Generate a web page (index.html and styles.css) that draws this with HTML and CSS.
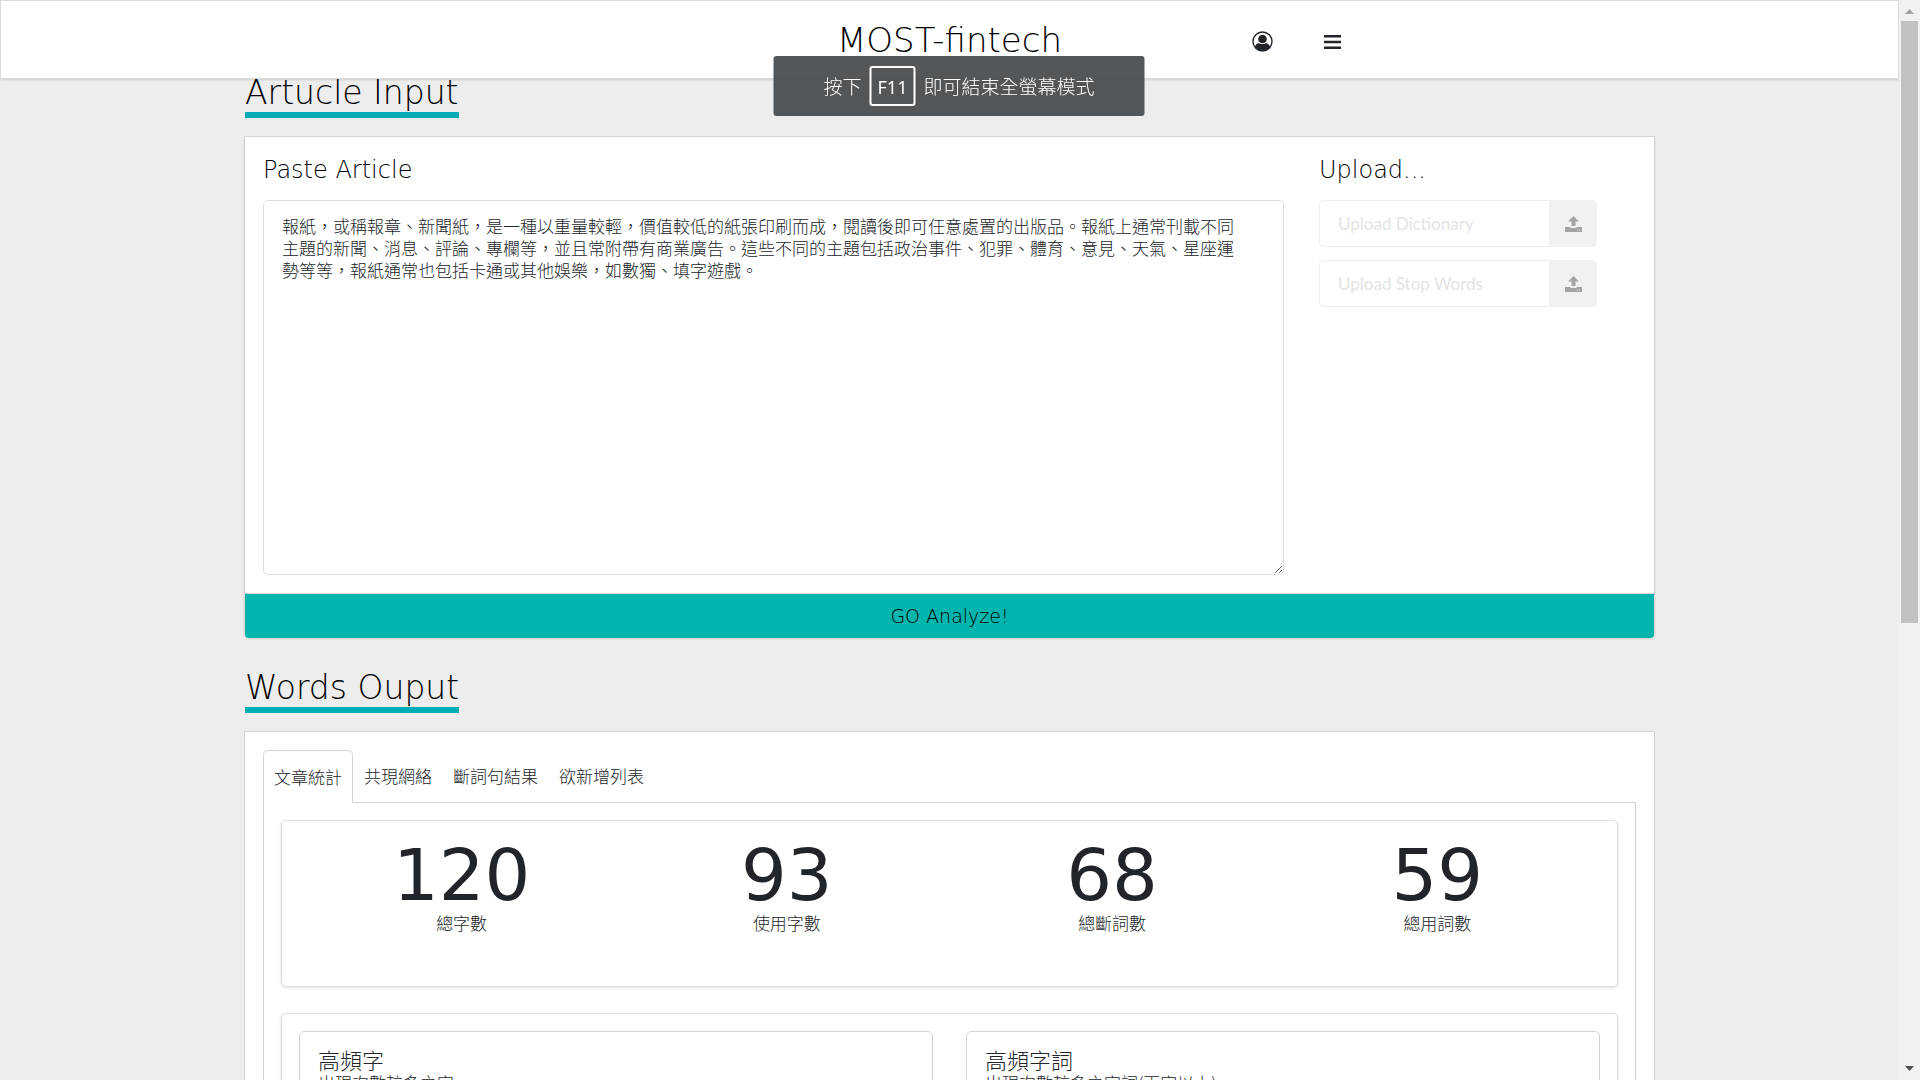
FILE: index.html
```html
<!DOCTYPE html>
<html lang="zh-Hant">
<head>
<meta charset="utf-8">
<title>MOST-fintech</title>
<meta name="viewport" content="width=device-width, initial-scale=1">
<link rel="stylesheet" href="styles.css">
</head>
<body>
<header class="topbar">
  <div class="topbar-inner">
    <h1 class="brand">MOST-fintech</h1>
    <nav class="topbar-actions" aria-label="Main">
      <button class="icon-button" type="button" aria-label="Account">
        <svg width="21" height="21" viewBox="0 0 21 21" fill="currentColor" aria-hidden="true"><circle cx="10.500" cy="10.500" r="9.500" fill="none" stroke="currentColor" stroke-width="1.400"/><circle cx="10.500" cy="8" r="4.300"/><path d="M3 16.200C3.300 13.600 5 12.200 7.200 12.200a7 7 0 0 0 6.600 0C16 12.200 17.700 13.600 18 16.200A9.500 9.500 0 0 1 3 16.200z"/></svg>
      </button>
      <button class="icon-button" type="button" aria-label="Menu">
        <svg width="17" height="14" viewBox="0 0 17 14" fill="currentColor" aria-hidden="true"><path d="M0 0h17v2.500H0zM0 5.800h17v2.500H0zM0 11.500h17v2.500H0z"/></svg>
      </button>
    </nav>
  </div>
</header>

<div class="fullscreen-notice" role="status">按下<kbd class="key">F11</kbd>即可結束全螢幕模式</div>

<main class="page">
  <section class="block">
    <h2 class="section-title">Artucle Input</h2>
    <form class="panel">
      <div class="input-grid">
        <div class="article">
          <label class="field-title" for="article">Paste Article</label>
          <textarea class="article-text" id="article">報紙，或稱報章、新聞紙，是一種以重量較輕，價值較低的紙張印刷而成，閱讀後即可任意處置的出版品。報紙上通常刊載不同主題的新聞、消息、評論、專欄等，並且常附帶有商業廣告。這些不同的主題包括政治事件、犯罪、體育、意見、天氣、星座運勢等等，報紙通常也包括卡通或其他娛樂，如數獨、填字遊戲。</textarea>
        </div>
        <div class="uploads">
          <h3 class="field-title">Upload...</h3>
          <div class="upload">
            <input class="upload-input" type="text" placeholder="Upload Dictionary" aria-label="Upload Dictionary" disabled>
            <button class="upload-button" type="button" aria-label="Choose dictionary" disabled>
              <svg width="17" height="16" viewBox="0 0 17 16" fill="currentColor" aria-hidden="true"><path d="M8.500 0L14 5.500H10.500V10H6.500V5.500H3z"/><path fill-rule="evenodd" d="M0 11h5.500v1h6v-1H17v5H0zM12 13.500v1h1v-1zM14 13.500v1h1v-1z"/></svg>
            </button>
          </div>
          <div class="upload">
            <input class="upload-input" type="text" placeholder="Upload Stop Words" aria-label="Upload Stop Words" disabled>
            <button class="upload-button" type="button" aria-label="Choose stop words" disabled>
              <svg width="17" height="16" viewBox="0 0 17 16" fill="currentColor" aria-hidden="true"><path d="M8.500 0L14 5.500H10.500V10H6.500V5.500H3z"/><path fill-rule="evenodd" d="M0 11h5.500v1h6v-1H17v5H0zM12 13.500v1h1v-1zM14 13.500v1h1v-1z"/></svg>
            </button>
          </div>
        </div>
      </div>
      <button class="analyze" type="button">GO Analyze!</button>
    </form>
  </section>

  <section class="block">
    <h2 class="section-title">Words Ouput</h2>
    <div class="panel output">
      <div class="tabs" role="tablist">
        <button class="tab tab-active" type="button" role="tab" aria-selected="true">文章統計</button>
        <button class="tab" type="button" role="tab" aria-selected="false">共現網絡</button>
        <button class="tab" type="button" role="tab" aria-selected="false">斷詞句結果</button>
        <button class="tab" type="button" role="tab" aria-selected="false">欲新增列表</button>
      </div>
      <div class="tab-body" role="tabpanel">
        <div class="segment stats">
          <div class="stat"><span class="stat-value">120</span><span class="stat-label">總字數</span></div>
          <div class="stat"><span class="stat-value">93</span><span class="stat-label">使用字數</span></div>
          <div class="stat"><span class="stat-value">68</span><span class="stat-label">總斷詞數</span></div>
          <div class="stat"><span class="stat-value">59</span><span class="stat-label">總用詞數</span></div>
        </div>
        <div class="segment cards">
          <article class="card"><h3 class="card-title">高頻字</h3><p class="card-note">出現次數較多之字</p></article>
          <article class="card"><h3 class="card-title">高頻字詞</h3><p class="card-note">出現次數較多之字詞(兩字以上)</p></article>
        </div>
      </div>
    </div>
  </section>
</main>

<div class="scrollbar" aria-hidden="true">
  <svg class="scroll-arrow scroll-up" width="9" height="5" viewBox="0 0 9 5"><path d="M0 5L4.500 0L9 5z"/></svg>
  <div class="scroll-track"><div class="scroll-thumb"></div></div>
  <svg class="scroll-arrow scroll-down" width="9" height="5" viewBox="0 0 9 5"><path d="M0 0h9L4.500 5z"/></svg>
</div>
</body>
</html>
```
FILE: styles.css
```css
:root {
  --display: "DejaVu Sans", "Noto Sans CJK TC", sans-serif;
  --cjk: "Noto Sans CJK TC", sans-serif;
  --ink: #212529;
  --teal: #00b5ad;
  --line: #d4d4d5;
}

* { box-sizing: border-box; }

html { height: 100%; overflow: hidden; }

body {
  margin: 0;
  height: 100%;
  overflow: hidden;
  padding-right: 21px;
  background: #ededed;
  color: var(--ink);
  font: 300 17px/22px var(--cjk);
}

h1, h2, h3, p { margin: 0; font-weight: 200; }
button, input, textarea { font: inherit; color: inherit; }

.topbar {
  position: relative;
  z-index: 2;
  background: #fff;
  border: 1px solid #dcdcdd;
  box-shadow: 0 1px 2px rgba(34, 36, 38, .15);
}

.topbar-inner {
  display: grid;
  grid-template-columns: 1fr auto 1fr;
  align-items: center;
  height: 77px;
}

.brand {
  grid-column: 2;
  color: #000;
  font: 200 34px/40px var(--display);
}

.topbar-actions {
  display: flex;
  align-items: center;
  gap: 51px;
  padding: 4px 0 0 190px;
}

.icon-button {
  display: flex;
  padding: 0;
  border: 0;
  background: none;
}

.fullscreen-notice {
  position: fixed;
  z-index: 5;
  top: 56px;
  left: 50%;
  transform: translateX(-50%);
  margin-left: -1px;
  display: flex;
  align-items: center;
  justify-content: center;
  gap: 8px;
  width: 371px;
  height: 60px;
  border-radius: 3px;
  background: rgba(72, 76, 80, .94);
  color: #fff;
  font-size: 19px;
  white-space: nowrap;
}

.key {
  padding: 9px 6px 7px;
  border: 2px solid #fff;
  border-radius: 3px;
  font: 400 18px/20px "Noto Sans", sans-serif;
}

.page {
  max-width: 1411px;
  margin: 0 auto;
}

.block {
  display: flex;
  flex-direction: column;
  align-items: flex-start;
}

.block + .block { margin-top: 31px; }

.section-title {
  border-bottom: 6px solid #00adb5;
  color: #000;
  font: 200 33px/38px var(--display);
  margin: 0 0 18px 1px;
}

.block:first-child .section-title { margin-top: -5px; }

.panel {
  width: 100%;
  background: #fff;
  border: 1px solid var(--line);
}

form.panel { border-radius: 0 0 5px 5px; border-bottom: 0; box-shadow: 0 1px 2px rgba(34, 36, 38, .15); }

.input-grid {
  display: grid;
  grid-template-columns: minmax(0, 1fr) 317px;
  gap: 35px;
  padding: 16px 18px 18px;
}

.field-title {
  display: block;
  margin-bottom: 13px;
  color: #000;
  font: 200 24px/34px var(--display);
}

.article-text {
  display: block;
  width: 100%;
  height: 375px;
  padding: 14px 40px 14px 18px;
  border: 1px solid #dededf;
  border-radius: 5px;
  background: #fff;
  resize: vertical;
  outline: 0;
}

.upload {
  display: flex;
  width: 278px;
  height: 47px;
  margin-bottom: 13px;
}

.upload-input {
  flex: 1;
  min-width: 0;
  padding: 0 18px;
  border: 1px solid #ececec;
  border-right: 0;
  border-radius: 5px 0 0 5px;
  background: #fff;
  font: 400 17px/22px Lato, sans-serif;
}

.upload-input::placeholder { color: #e4e4e4; opacity: 1; }

.upload-button {
  display: flex;
  align-items: center;
  justify-content: center;
  width: 48px;
  border: 0;
  border-radius: 0 5px 5px 0;
  background: #f1f1f2;
  color: #a3a3a4;
}

.analyze {
  display: block;
  width: 100%;
  height: 45px;
  padding: 0;
  border: 0;
  border-top: 1px solid var(--line);
  border-radius: 0 0 4px 4px;
  background: var(--teal);
  color: #000;
  font: 200 19px/22px var(--display);
}

.output { padding: 18px; }

.tabs { display: flex; gap: 1px; }

.tab {
  padding: 15px 10px;
  border: 0;
  background: #fff;
}

.tab-active {
  position: relative;
  border: 1px solid var(--line);
  border-bottom: 0;
  border-radius: 5px 5px 0 0;
  margin-bottom: -1px;
}

.tab-body {
  border: 1px solid var(--line);
  padding: 17px;
}

.segment {
  padding: 17px;
  border: 1px solid #dededf;
  border-radius: 5px;
  box-shadow: 0 1px 3px rgba(34, 36, 38, .15);
}

.segment + .segment { margin-top: 26px; }

.stats {
  display: grid;
  grid-template-columns: repeat(4, 1fr);
  min-height: 167px;
}

.stat {
  display: flex;
  flex-direction: column;
  align-items: center;
}

.stat-value { font: 400 72px/74px var(--display); }

.cards {
  display: grid;
  grid-template-columns: 1fr 1fr;
  gap: 33px;
}

.card {
  padding: 15px 18px;
  border: 1px solid var(--line);
  border-radius: 5px;
}

.card-title { font: 300 22px/25px var(--cjk); }

.scrollbar {
  position: fixed;
  z-index: 4;
  top: 0;
  right: 0;
  bottom: 0;
  display: flex;
  flex-direction: column;
  align-items: center;
  width: 21px;
  padding: 9px 0;
  background: #f1f1f1;
}

.scroll-arrow { flex: none; }
.scroll-up { fill: #a3a3a3; }
.scroll-down { fill: #505050; }
.scroll-track { flex: 1; width: 17px; padding: 7px 0; }
.scroll-thumb { height: 58%; background: #c1c1c1; }
```
